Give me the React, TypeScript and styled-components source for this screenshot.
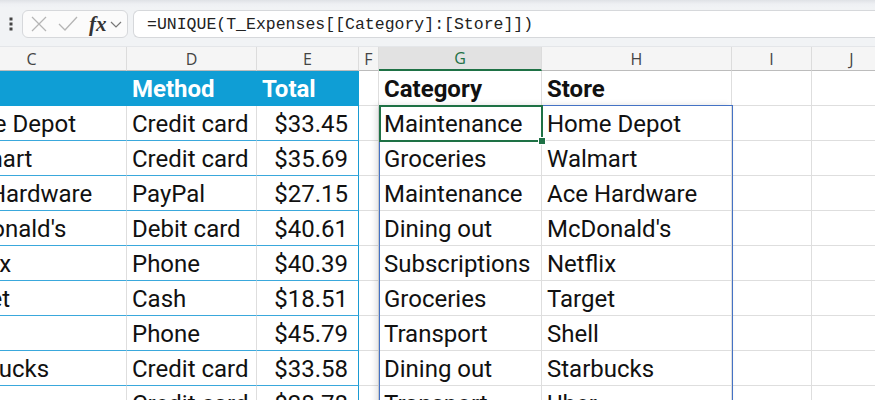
import styled, { createGlobalStyle } from "styled-components";

const GlobalStyle = createGlobalStyle`
  html, body { margin: 0; padding: 0; background: #ffffff; overflow: hidden; }
  body { font-family: "Roboto", "Liberation Sans", sans-serif; }
`;

const Page = styled.div`
  width: 875px;
  height: 400px;
  overflow: hidden;
  display: flex;
  flex-direction: column;
`;

const FormulaBar = styled.div`
  height: 47px;
  flex: none;
  display: flex;
  align-items: flex-start;
  padding-top: 10px;
  box-sizing: border-box;
  background: linear-gradient(#dfe2e6 0px, #eef0f3 4px, #f1f3f5 8px);
  border-bottom: 1px solid #e4e6e9;
`;

const Grip = styled.div`
  width: 22px;
  height: 28px;
  display: flex;
  align-items: center;
  justify-content: center;
  color: #444;
`;

const NameBox = styled.div`
  width: 106px;
  height: 28px;
  box-sizing: border-box;
  border: 1px solid #d6d8db;
  border-radius: 6px;
  background: #fbfbfb;
  display: flex;
  align-items: center;
  padding-left: 6px;
  gap: 8px;
`;

const Fx = styled.span`
  font-family: "Liberation Serif", serif;
  font-style: italic;
  font-weight: 700;
  font-size: 21px;
  color: #333;
  margin-left: 2px;
  margin-right: -5px;
`;

const FormulaInput = styled.div`
  flex: 1;
  margin-left: 5px;
  height: 28px;
  box-sizing: border-box;
  border: 1px solid #d6d8db;
  border-right: none;
  border-radius: 6px 0 0 6px;
  background: #ffffff;
  display: flex;
  align-items: center;
  padding-left: 13px;
  font-family: "Liberation Mono", monospace;
  font-size: 16.5px;
  color: #222;
  white-space: nowrap;
`;

const Sheet = styled.div`
  position: relative;
  margin-left: -63px;
  display: grid;
  grid-template-columns: 190px 130px 102px 20px 163px 190px 80px 80px;
  grid-template-rows: 24px;
  grid-auto-rows: 35px;
  width: max-content;
`;

const ColHead = styled.div<{ $active?: boolean }>`
  box-sizing: border-box;
  display: flex;
  align-items: center;
  justify-content: center;
  font-family: "Open Sans", sans-serif;
  font-size: 16px;
  color: ${(p) => (p.$active ? "#1e7145" : "#444")};
  background: ${(p) => (p.$active ? "#e2e2e2" : "#f5f5f5")};
  border-right: 1px solid #dcdcdc;
  border-bottom: ${(p) => (p.$active ? "2px solid #1e7145" : "1px solid #bcbcbc")};
`;

const Cell = styled.div<{
  $variant?: "plain" | "tableHead" | "table" | "tableLast";
  $bold?: boolean;
  $right?: boolean;
}>`
  box-sizing: border-box;
  display: flex;
  align-items: flex-end;
  justify-content: ${(p) => (p.$right ? "flex-end" : "flex-start")};
  padding: 0 ${(p) => (p.$right ? "10px" : "0")} 1px 5px;
  font-size: 24px;
  line-height: 29px;
  white-space: nowrap;
  overflow: hidden;
  font-weight: ${(p) => (p.$bold ? 700 : 400)};
  color: ${(p) => (p.$variant === "tableHead" ? "#ffffff" : "#111")};
  background: ${(p) => (p.$variant === "tableHead" ? "#0f9ed5" : "#ffffff")};
  border-right: 1px solid
    ${(p) =>
      p.$variant === "tableLast"
        ? "#1a9bd3"
        : p.$variant === "tableHead"
          ? "#0f9ed5"
          : "#dedede"};
  border-bottom: 1px solid
    ${(p) =>
      p.$variant === "table" || p.$variant === "tableLast"
        ? "#3aa8dc"
        : p.$variant === "tableHead"
          ? "#0f9ed5"
          : "#dedede"};
`;

const SpillRange = styled.div`
  position: absolute;
  left: 442px;
  top: 58px;
  width: 354px;
  height: 400px;
  box-sizing: border-box;
  border: 1px solid #4472c4;
  box-shadow: -3px 0 6px rgba(0, 0, 0, 0.12);
  pointer-events: none;
`;

const ActiveCell = styled.div`
  position: absolute;
  left: 442px;
  top: 58px;
  width: 164px;
  height: 37px;
  box-sizing: border-box;
  border: 2px solid #1e7145;
  pointer-events: none;
  &::after {
    content: "";
    position: absolute;
    right: -5px;
    bottom: -5px;
    width: 6px;
    height: 6px;
    background: #1e7145;
    border: 1px solid #fff;
  }
`;

const XIcon = () => (
  <svg width="20" height="20" viewBox="0 0 20 20" fill="none" stroke="#b5b5b5" strokeWidth="1.3">
    <path d="M3 3 L17 17 M17 3 L3 17" />
  </svg>
);

const CheckIcon = () => (
  <svg width="22" height="20" viewBox="0 0 22 20" fill="none" stroke="#b5b5b5" strokeWidth="1.3">
    <path d="M2 10 L8 16 L20 3" />
  </svg>
);

const Chevron = () => (
  <svg width="12" height="10" viewBox="0 0 12 10" fill="none" stroke="#777" strokeWidth="1.2">
    <path d="M1 3 L6 8 L11 3" />
  </svg>
);

const GripIcon = () => (
  <svg width="4" height="14" viewBox="0 0 4 14" fill="#444">
    <rect x="0.5" y="0.5" width="3" height="3" />
    <rect x="0.5" y="5.5" width="3" height="3" />
    <rect x="0.5" y="10.5" width="3" height="3" />
  </svg>
);

const rows = [
  ["Home Depot", "Credit card", "$33.45", "Maintenance", "Home Depot"],
  ["Walmart", "Credit card", "$35.69", "Groceries", "Walmart"],
  ["Ace Hardware", "PayPal", "$27.15", "Maintenance", "Ace Hardware"],
  ["McDonald's", "Debit card", "$40.61", "Dining out", "McDonald's"],
  ["Netflix", "Phone", "$40.39", "Subscriptions", "Netflix"],
  ["Target", "Cash", "$18.51", "Groceries", "Target"],
  ["Shell", "Phone", "$45.79", "Transport", "Shell"],
  ["Starbucks", "Credit card", "$33.58", "Dining out", "Starbucks"],
  ["Uber", "Credit card", "$28.78", "Transport", "Uber"],
];

const cols = ["C", "D", "E", "F", "G", "H", "I", "J"];

export default function App() {
  return (
    <Page>
      <GlobalStyle />
      <FormulaBar>
        <Grip>
          <GripIcon />
        </Grip>
        <NameBox>
          <XIcon />
          <CheckIcon />
          <Fx>fx</Fx>
          <Chevron />
        </NameBox>
        <FormulaInput>=UNIQUE(T_Expenses[[Category]:[Store]])</FormulaInput>
      </FormulaBar>
      <Sheet>
        {cols.map((c) => (
          <ColHead key={c} $active={c === "G"}>
            {c}
          </ColHead>
        ))}
        <Cell $variant="tableHead" $bold>
          Store
        </Cell>
        <Cell $variant="tableHead" $bold>
          Method
        </Cell>
        <Cell $variant="tableHead" $bold>
          Total
        </Cell>
        <Cell />
        <Cell $bold>Category</Cell>
        <Cell $bold>Store</Cell>
        <Cell />
        <Cell />
        {rows.map((r, i) => (
          <>
            <Cell key={`c${i}`} $variant="table">
              {r[0]}
            </Cell>
            <Cell key={`d${i}`} $variant="table">
              {r[1]}
            </Cell>
            <Cell key={`e${i}`} $variant="tableLast" $right>
              {r[2]}
            </Cell>
            <Cell key={`f${i}`} />
            <Cell key={`g${i}`}>{r[3]}</Cell>
            <Cell key={`h${i}`}>{r[4]}</Cell>
            <Cell key={`i${i}`} />
            <Cell key={`j${i}`} />
          </>
        ))}
        <SpillRange />
        <ActiveCell />
      </Sheet>
    </Page>
  );
}
